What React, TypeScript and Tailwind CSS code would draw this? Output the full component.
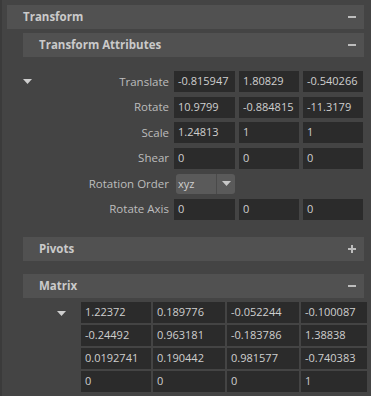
import React from "react";

const font = { fontFamily: '"Open Sans", "Noto Sans", sans-serif' };

function Minus() {
  return <div className="w-[8px] h-[2px] bg-[#bdbdbd]" />;
}

function Plus() {
  return (
    <div className="relative w-[8px] h-[8px]">
      <div className="absolute left-0 top-[3px] w-[8px] h-[2px] bg-[#bdbdbd]" />
      <div className="absolute left-[3px] top-0 w-[2px] h-[8px] bg-[#bdbdbd]" />
    </div>
  );
}

function Tri({ color = "#cfcfcf" }: { color?: string }) {
  return (
    <svg width="9" height="5" viewBox="0 0 9 5">
      <polygon points="0,0 9,0 4.5,5" fill={color} />
    </svg>
  );
}

function Header({ title, open }: { title: string; open: boolean }) {
  return (
    <div className="flex items-center h-[24px] bg-[#515151] pr-[8px] pl-[16px]">
      <span className="flex-1 text-[11.5px] font-bold text-[#cacaca] leading-none">{title}</span>
      {open ? <Minus /> : <Plus />}
    </div>
  );
}

function Field({ v, w }: { v: string; w: string }) {
  return (
    <div className={`${w} h-[21px] bg-[#2b2b2b] flex items-center pl-[4px] text-[11px] text-[#cfcfcf] whitespace-nowrap overflow-hidden`}>
      {v}
    </div>
  );
}

function Row({ label, vals }: { label: string; vals: string[] }) {
  return (
    <div className="flex items-center h-[21px]">
      <div className="w-[103px] text-right text-[11.5px] text-[#bdbdbd] whitespace-nowrap">{label}</div>
      <div className="flex gap-[4px] ml-[5px]">
        <Field v={vals[0]} w="w-[61px]" />
        <Field v={vals[1]} w="w-[60px]" />
        <Field v={vals[2]} w="w-[60px]" />
      </div>
    </div>
  );
}

const matrix = [
  ["1.22372", "0.189776", "-0.052244", "-0.100087"],
  ["-0.24492", "0.963181", "-0.183786", "1.38838"],
  ["0.0192741", "0.190442", "0.981577", "-0.740383"],
  ["0", "0", "0", "1"],
];

export default function App() {
  return (
    <div className="w-[371px] h-[396px] bg-[#444444] flex overflow-hidden" style={font}>
      <div className="w-[2px] h-full bg-[#3b3b3b]" />
      <div className="flex-1 pl-[5px] pt-[5px]">
        <div className="mr-[7px]">
          <Header title="Transform" open />
        </div>
        <div className="ml-[16px] mt-[4px]">
          <div className="mr-[7px]">
            <Header title="Transform Attributes" open />
          </div>
          <div className="flex mt-[14px]">
            <div className="w-[43px] pt-[8px]">
              <Tri />
            </div>
            <div className="flex flex-col gap-[4.5px]">
              <Row label="Translate" vals={["-0.815947", "1.80829", "-0.540266"]} />
              <Row label="Rotate" vals={["10.9799", "-0.884815", "-11.3179"]} />
              <Row label="Scale" vals={["1.24813", "1", "1"]} />
              <Row label="Shear" vals={["0", "0", "0"]} />
              <div className="flex items-center h-[21px]">
                <div className="w-[103px] text-right text-[11.5px] text-[#bdbdbd] whitespace-nowrap">Rotation Order</div>
                <div className="ml-[7px] w-[59px] h-[20px] bg-[#5a5a5a] rounded-[3px] flex items-center">
                  <span className="w-[40px] pl-[2px] text-[11px] text-[#cfcfcf] leading-none">xyz</span>
                  <div className="w-[1px] h-full bg-[#4a4a4a]" />
                  <div className="flex-1 flex justify-center">
                    <Tri color="#c8c8c8" />
                  </div>
                </div>
              </div>
              <Row label="Rotate Axis" vals={["0", "0", "0"]} />
            </div>
          </div>
          <div className="mr-[7px] mt-[17px]">
            <Header title="Pivots" open={false} />
          </div>
          <div className="mr-[7px] mt-[13px]">
            <Header title="Matrix" open />
          </div>
          <div className="flex mt-[4px]">
            <div className="w-[58px] pl-[34px] pt-[9px]">
              <Tri />
            </div>
            <div className="flex flex-col gap-[2px]">
              {matrix.map((r, i) => (
                <div key={i} className="flex gap-[2px]">
                  <Field v={r[0]} w="w-[70px]" />
                  <Field v={r[1]} w="w-[72px]" />
                  <Field v={r[2]} w="w-[72px]" />
                  <Field v={r[3]} w="w-[66px]" />
                </div>
              ))}
            </div>
          </div>
        </div>
      </div>
    </div>
  );
}
